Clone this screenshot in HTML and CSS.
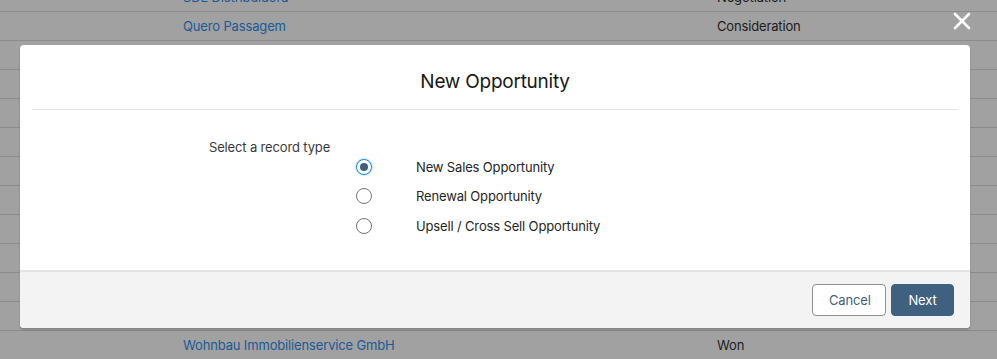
FILE: index.html
```html
<!DOCTYPE html>
<html lang="en">
<head>
    <meta charset="UTF-8">
    <meta name="viewport" content="width=device-width, initial-scale=1.0">
    <title>New Opportunity</title>
    <link rel="stylesheet" href="styles.css">
</head>
<body>
    <div class="list">
        <div class="row"><a class="name">SDE Distribuidora</a><span class="stage">Negotiation</span></div>
        <div class="row"><a class="name">Quero Passagem</a><span class="stage">Consideration</span></div>
        <!-- rows hidden behind the modal -->
        <div class="row"></div>
        <div class="row"></div>
        <div class="row"></div>
        <div class="row"></div>
        <div class="row"></div>
        <div class="row"></div>
        <div class="row"></div>
        <div class="row"></div>
        <div class="row"></div>
        <div class="row"></div>
        <div class="row"><a class="name">Wohnbau Immobilienservice GmbH</a><span class="stage">Won</span></div>
    </div>

    <button class="close" aria-label="Close">
        <svg width="18" height="18" viewBox="0 0 18 18">
            <path d="M2 2 L16 16 M16 2 L2 16" stroke="#fff" stroke-width="2.6" stroke-linecap="round"/>
        </svg>
    </button>

    <div class="modal">
        <header class="modal-header">
            <h2>New Opportunity</h2>
        </header>
        <div class="modal-body">
            <p class="legend">Select a record type</p>
            <ul class="options">
                <li><span class="radio checked"></span><span class="label">New Sales Opportunity</span></li>
                <li><span class="radio"></span><span class="label">Renewal Opportunity</span></li>
                <li><span class="radio"></span><span class="label">Upsell / Cross Sell Opportunity</span></li>
            </ul>
        </div>
        <footer class="modal-footer">
            <button class="btn btn-neutral">Cancel</button>
            <button class="btn btn-brand">Next</button>
        </footer>
    </div>
</body>
</html>
```

FILE: styles.css
```css
body {
    font-family: Inter, 'Liberation Sans', sans-serif;
    font-size: 13px;
    letter-spacing: -0.15px;
    background-color: #a1a1a1;
    color: #1c1c1c;
    margin: 0;
    overflow: hidden;
}

.list {
    margin-top: -17px;
}

.row {
    display: grid;
    grid-template-columns: 534px 1fr;
    height: 28px;
    align-items: center;
    padding-left: 183px;
    border-bottom: 1px solid #8c8c8c;
}

.name {
    color: #1b5a96;
}

.close {
    position: absolute;
    top: 12px;
    left: 953px;
    padding: 0;
    border: none;
    background: none;
    width: 18px;
    height: 18px;
}

.modal {
    position: absolute;
    top: 45px;
    left: 20px;
    width: 950px;
    height: 283px;
    background-color: #fff;
    border-radius: 4px;
    box-shadow: 0 2px 2px rgba(0, 0, 0, 0.18);
    display: flex;
    flex-direction: column;
    overflow: hidden;
}

.modal-header {
    height: 64px;
    margin: 0 12px;
    border-bottom: 1px solid #e5e5e5;
    display: flex;
    align-items: center;
    justify-content: center;
}

.modal-header h2 {
    margin: 0;
    font-size: 19px;
    font-weight: 400;
    letter-spacing: -0.25px;
    color: #181818;
    padding-top: 8px;
}

.modal-body {
    flex: 1;
    padding: 29px 0 0 189px;
}

.legend {
    margin: 0 0 -3px;
    color: #3a3a3a;
}

.options {
    list-style: none;
    margin: 0;
    padding: 0 0 0 147px;
}

.options li {
    display: flex;
    align-items: center;
    height: 29.5px;
}

.radio {
    width: 14px;
    height: 14px;
    border: 1px solid #757575;
    border-radius: 50%;
    background: #fff;
    position: relative;
    margin-right: 44px;
}

.radio.checked {
    border-color: #1b8cf2;
    box-shadow: 0 0 2px #6fb5f5;
}

.radio.checked::after {
    content: "";
    position: absolute;
    top: 3px;
    left: 3px;
    width: 8px;
    height: 8px;
    border-radius: 50%;
    background: #3e5f7f;
}

.label {
    color: #262626;
}

.modal-footer {
    height: 56px;
    background-color: #f3f3f3;
    border-top: 2px solid #e3e3e3;
    display: flex;
    justify-content: flex-end;
    align-items: center;
    gap: 5px;
    padding: 0 16px;
}

.btn {
    height: 32px;
    border-radius: 4px;
    font-family: inherit;
    font-size: 13px;
    letter-spacing: -0.15px;
    padding: 0 16px;
    cursor: pointer;
}

.btn-neutral {
    width: 74px;
    background: #fff;
    border: 1px solid #8f8f8f;
    color: #3e5f7f;
}

.btn-brand {
    width: 63px;
    background: #3f607f;
    border: 1px solid #3f607f;
    color: #fff;
}
```
